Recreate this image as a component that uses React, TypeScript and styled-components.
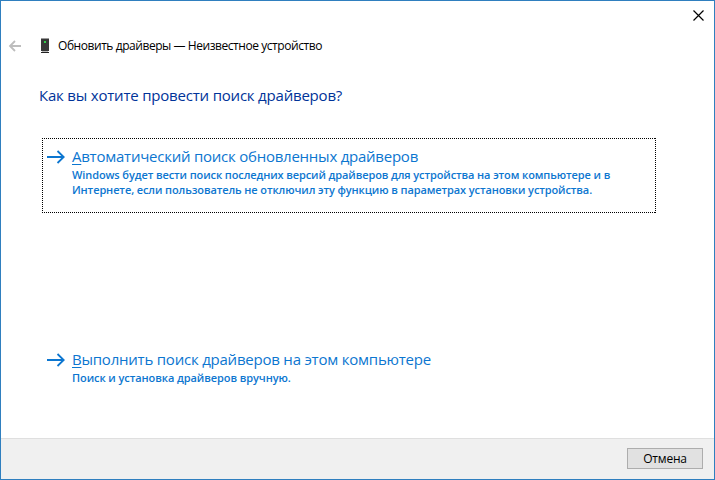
import React from "react";
import styled, { createGlobalStyle } from "styled-components";

const GlobalStyle = createGlobalStyle`
  *, *::before, *::after { box-sizing: border-box; }
  body { margin: 0; background: #fff; }
`;

const Dialog = styled.main`
  width: 715px;
  height: 480px;
  display: flex;
  flex-direction: column;
  background: #fff;
  border: 1px solid #2f7fbf;
  font-family: "Open Sans", "Noto Sans", sans-serif;
  color: #000;
  overflow: hidden;
`;

const TitleBar = styled.div`
  height: 30px;
  flex: none;
  display: flex;
  justify-content: flex-end;
`;

const CloseButton = styled.button`
  width: 31px;
  height: 28px;
  padding: 0;
  border: 0;
  background: none;
  display: flex;
  align-items: center;
  justify-content: center;
`;

const Header = styled.header`
  height: 30px;
  flex: none;
  display: flex;
  align-items: center;
  padding-left: 7px;
`;

const BackButton = styled.button`
  width: 14px;
  height: 14px;
  margin-right: 18px;
  padding: 0;
  border: 0;
  background: none;
  display: flex;
`;

const DeviceIcon = styled.svg`
  width: 10px;
  height: 16px;
  flex: none;
  margin-right: 8px;
`;

const WindowTitle = styled.span`
  font-size: 12px;
  line-height: 16px;
  letter-spacing: -0.44px;
  white-space: nowrap;
`;

const Content = styled.section`
  flex: 1;
  min-height: 0;
  display: flex;
  flex-direction: column;
  gap: 128px;
  padding: 23px 58px 0 38px;
`;

const Heading = styled.h1`
  margin: 0 0 -96px;
  height: 22px;
  font-size: 15px;
  line-height: 22px;
  font-weight: 400;
  letter-spacing: -0.2px;
  color: #003399;
  white-space: nowrap;
`;

const CommandLink = styled.button`
  position: relative;
  width: 614px;
  height: 75px;
  flex: none;
  margin-left: 3px;
  padding: 8px 0 0 5px;
  border: 0;
  background: none;
  display: flex;
  align-items: flex-start;
  text-align: left;
  font-family: inherit;
  color: #0c76d0;
`;

const FocusOutline = styled.svg`
  position: absolute;
  inset: 0;
  width: 614px;
  height: 75px;
`;

const LinkArrow = styled.svg`
  width: 18px;
  height: 16px;
  flex: none;
  margin: 3px 7px 0 0;
`;

const LinkBody = styled.span`
  display: flex;
  flex-direction: column;
`;

const LinkTitle = styled.span<{ $spacing: string }>`
  font-size: 15px;
  line-height: 20px;
  margin-bottom: 1px;
  letter-spacing: ${(p) => p.$spacing};
  white-space: nowrap;
`;

const AccessKey = styled.span`
  text-decoration: underline;
  text-decoration-thickness: 1px;
  text-underline-offset: 2px;
`;

const LinkText = styled.span<{ $spacing: string }>`
  font-size: 11px;
  font-weight: 600;
  line-height: 15px;
  letter-spacing: ${(p) => p.$spacing};
  white-space: nowrap;
`;

const Footer = styled.footer`
  height: 41px;
  flex: none;
  display: flex;
  justify-content: flex-end;
  align-items: flex-start;
  padding: 9px 11px 0 0;
  background: #f0f0f0;
  border-top: 1px solid #dfdfdf;
`;

const CancelButton = styled.button`
  width: 76px;
  height: 21px;
  padding: 0;
  border: 1px solid #adadad;
  background: #e1e1e1;
  color: #000;
  font-family: inherit;
  font-size: 12px;
  line-height: 19px;
  letter-spacing: -0.2px;
`;

const Arrow = () => (
  <LinkArrow viewBox="0 0 18 16" fill="none" stroke="#0c76d0" strokeWidth="1.8">
    <path d="M0 8H17M10.5 2L16.7 8L10.5 14" />
  </LinkArrow>
);

type CommandProps = {
  title: string;
  titleSpacing: string;
  lines: { text: string; spacing: string }[];
  focused?: boolean;
};

const Command = ({ title, titleSpacing, lines, focused }: CommandProps) => (
  <CommandLink>
    {focused && (
      <FocusOutline fill="none" stroke="#000">
        <path d="M0 .5H614M0 74.5H614M.5 0V75M613.5 0V75" strokeDasharray="1 1" />
      </FocusOutline>
    )}
    <Arrow />
    <LinkBody>
      <LinkTitle $spacing={titleSpacing}>
        <AccessKey>{title[0]}</AccessKey>
        {title.slice(1)}
      </LinkTitle>
      {lines.map((line) => (
        <LinkText key={line.text} $spacing={line.spacing}>
          {line.text}
        </LinkText>
      ))}
    </LinkBody>
  </CommandLink>
);

export default function App() {
  return (
    <>
      <GlobalStyle />
      <Dialog>
        <TitleBar>
          <CloseButton aria-label="Закрыть">
            <svg width="11" height="11" viewBox="0 0 11 11" stroke="#000" strokeWidth="1.2">
              <path d="M.5 .5L10.5 10.5M10.5 .5L.5 10.5" />
            </svg>
          </CloseButton>
        </TitleBar>
        <Header>
          <BackButton aria-label="Назад">
            <svg width="14" height="14" viewBox="0 0 14 14" fill="none" stroke="#bdbdbd" strokeWidth="1.8">
              <path d="M13 7H2M7 2L2 7L7 12" />
            </svg>
          </BackButton>
          <DeviceIcon viewBox="0 0 10 16">
            <path fill="#9a9a9a" d="M1 0H9V1H1Z" />
            <path fill="#383838" d="M1 1H9V13H1Z" />
            <path fill="#32d04a" d="M4 3H6V5H4Z" />
            <path fill="#bbb" d="M2 13H8V14H2Z" />
            <path fill="#222" d="M1 14H9V15H1Z" />
          </DeviceIcon>
          <WindowTitle>Обновить драйверы — Неизвестное устройство</WindowTitle>
        </Header>
        <Content>
          <Heading>Как вы хотите провести поиск драйверов?</Heading>
          <Command
            focused
            title="Автоматический поиск обновленных драйверов"
            titleSpacing="-0.24px"
            lines={[
              { text: "Windows будет вести поиск последних версий драйверов для устройства на этом компьютере и в", spacing: "-0.105px" },
              { text: "Интернете, если пользователь не отключил эту функцию в параметрах установки устройства.", spacing: "-0.105px" },
            ]}
          />
          <Command
            title="Выполнить поиск драйверов на этом компьютере"
            titleSpacing="-0.22px"
            lines={[{ text: "Поиск и установка драйверов вручную.", spacing: "-0.08px" }]}
          />
        </Content>
        <Footer>
          <CancelButton>Отмена</CancelButton>
        </Footer>
      </Dialog>
    </>
  );
}
